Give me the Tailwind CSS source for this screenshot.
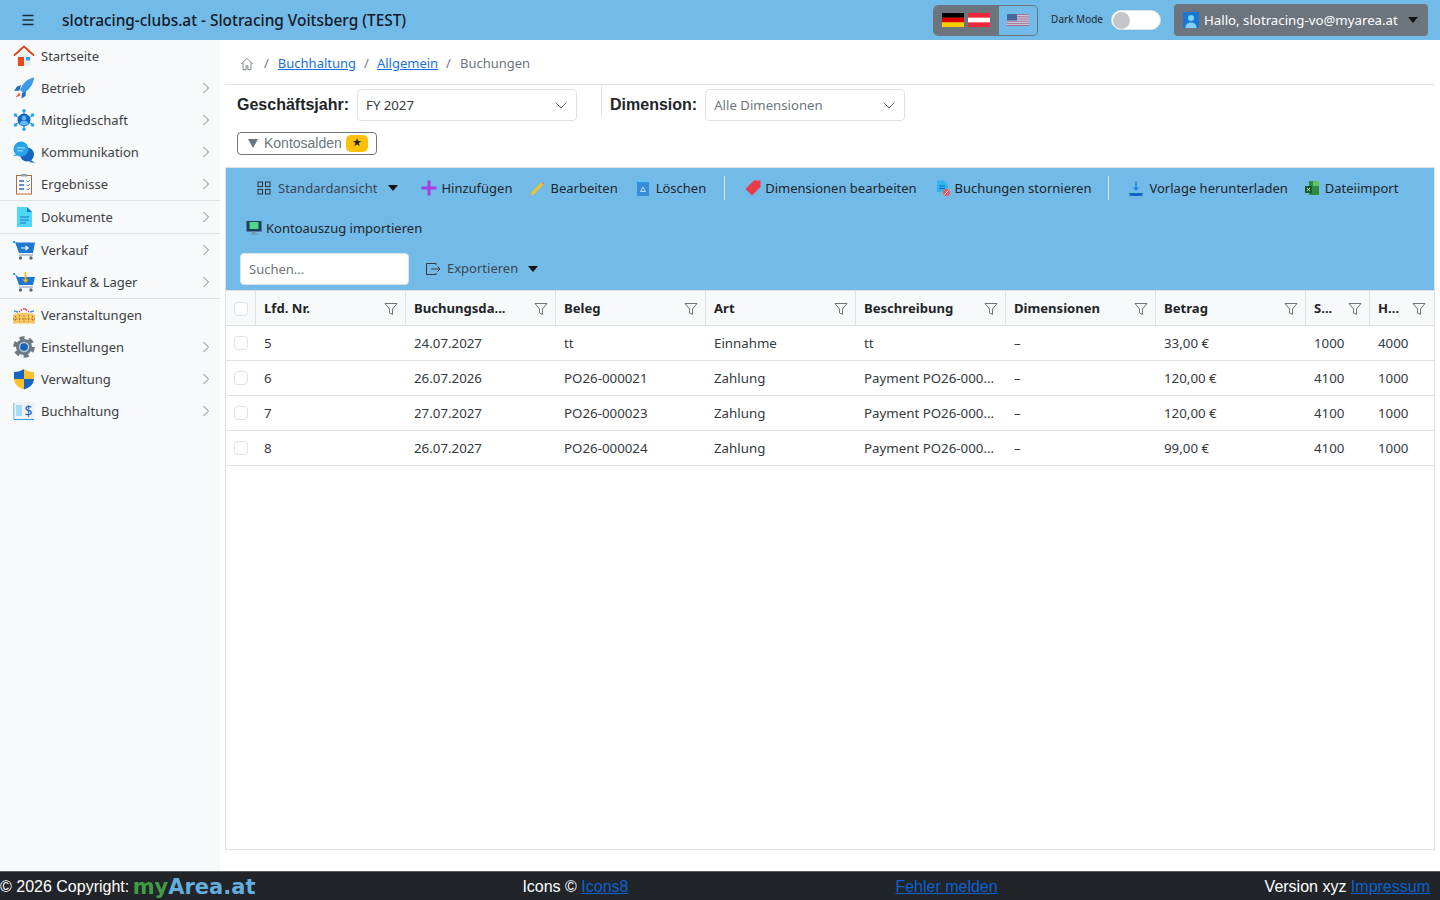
<!DOCTYPE html>
<html lang="de">
<head>
<meta charset="UTF-8">
<title>Buchungen</title>
<script src="https://cdn.jsdelivr.net/npm/@tailwindcss/browser@4"></script>
</head>
<body class="h-screen w-full overflow-hidden flex flex-col bg-white text-[13px] text-[#343a40] font-['Noto_Sans','Open_Sans',sans-serif]">
  <!-- Header -->
  <header class="h-10 shrink-0 bg-[#72bbe8] flex items-center text-[#111827]">
    <svg class="w-3.5 h-3.5 ml-[21px]" viewBox="0 0 14 14" fill="none" stroke="#212b36" stroke-width="1.4"><path d="M1.500 2.500h11M1.500 7h11M1.500 11.500h11"/></svg>
    <span class="ml-[27px] pt-[2px] text-[15.400px] font-medium">slotracing-clubs.at - Slotracing Voitsberg (TEST)</span>
    <div class="ml-auto flex items-center">
      <div class="w-[105px] h-[31px] rounded-[5px] border border-[#6c757d] flex overflow-hidden">
        <div class="w-[65px] bg-[#6c757d] flex items-center pl-2 gap-[4px]">
          <svg class="w-[22px] h-[14px]" viewBox="0 0 3 3" preserveAspectRatio="none"><rect width="3" height="1" fill="#000"/><rect y="1" width="3" height="1" fill="#dd0000"/><rect y="2" width="3" height="1" fill="#ffce00"/></svg>
          <svg class="w-[22px] h-[14px]" viewBox="0 0 3 3" preserveAspectRatio="none"><rect width="3" height="3" fill="#ed2939"/><rect y="1" width="3" height="1" fill="#fff"/></svg>
        </div>
        <div class="flex-1 flex items-center pl-2 opacity-60">
          <svg class="w-[22px] h-[12px]" viewBox="0 0 22 12" preserveAspectRatio="none"><rect width="22" height="12" fill="#d22f45"/><path d="M0 1.400h22M0 3.200h22M0 5h22M0 6.800h22M0 8.600h22M0 10.400h22" stroke="#fff" stroke-width=".9"/><rect width="10" height="6.500" fill="#2b2c6e"/></svg>
        </div>
      </div>
      <span class="ml-[13px] pb-[2px] text-[10px] text-[#212529]">Dark Mode</span>
      <div class="ml-2 w-[50px] h-5 rounded-full bg-white border border-[#dee2e6] flex items-center pl-px">
        <span class="w-[17px] h-[17px] rounded-full bg-[#c4c6c9]"></span>
      </div>
      <button class="ml-[13px] mr-3 w-[254px] h-8 rounded-[4px] bg-[#6c757d] flex items-center pl-[9px] text-white text-[13.250px]">
        <svg class="w-4 h-4 shrink-0" viewBox="0 0 16 16"><rect width="16" height="16" fill="#1976d2"/><circle cx="8" cy="6" r="3" fill="#7fd0f5"/><path d="M2.500 16c0-4 2.500-5.500 5.500-5.500s5.500 1.500 5.500 5.500z" fill="#7fd0f5"/></svg>
        <span class="ml-[5px] pt-[2px] whitespace-nowrap">Hallo, slotracing-vo@myarea.at</span>
        <span class="ml-auto mr-[10px] border-x-[5px] border-x-transparent border-t-[6px] border-t-[#111]"></span>
      </button>
    </div>
  </header>

  <div class="flex-1 flex min-h-0">
    <!-- Sidebar -->
    <aside class="w-[220px] shrink-0 bg-[#f8f9fa] text-[13px] text-[#3b4046]">
      <a class="h-8 flex items-center pl-[13px] pr-[10px]">
        <svg class="w-[22px] h-[22px] shrink-0" viewBox="0 0 22 22"><path d="M4 10.500 11 4l7 6.500V21H4z" fill="#eceff1"/><path d="M1 10.500 11 1.500l10 9" fill="none" stroke="#d84315" stroke-width="1.800"/><rect x="5" y="12" width="6" height="9" fill="#e64a19"/><rect x="13" y="12" width="4" height="3.500" fill="#29a3e8"/></svg>
        <span class="ml-[6px] pt-[2px]">Startseite</span>
      </a>
      <a class="h-8 flex items-center pl-[13px] pr-[10px]">
        <svg class="w-[22px] h-[22px] shrink-0" viewBox="0 0 22 22"><path d="M21 .5C15 1.500 9.500 6 7 13l3.500 3C16.500 13 20.500 7 21 .5z" fill="#3d9ae8"/><path d="M8 8 4 9.500 1 14l5.500-.5zM13 14.500l-.5 4.500-4 2.500.5-5.500z" fill="#1e6fc2"/><path d="m6 15.500-3.500 5 5-2z" fill="#f4603e"/></svg>
        <span class="ml-[6px] pt-[2px]">Betrieb</span>
        <svg class="ml-auto w-2 h-3" viewBox="0 0 8 12" fill="none" stroke="#7c8287"><path d="m1.500 1 5 5-5 5"/></svg>
      </a>
      <a class="h-8 flex items-center pl-[13px] pr-[10px]">
        <svg class="w-[22px] h-[22px] shrink-0" viewBox="0 0 22 22"><path d="M11 1v20M1 6l20 10M21 6 1 16" stroke="#1e88e5" stroke-width="1"/><circle cx="11" cy="11" r="6.500" fill="#1565c0"/><circle cx="11" cy="9" r="2.300" fill="#64b5f6"/><path d="M6.500 15c.5-2.500 2.500-3.500 4.500-3.500s4 1 4.500 3.500c-2.500 2-6.500 2-9 0z" fill="#64b5f6"/><circle cx="11" cy="1.800" r="1.800" fill="#29a3e8"/><circle cx="11" cy="20.200" r="1.800" fill="#29a3e8"/><circle cx="2.500" cy="6" r="1.800" fill="#29a3e8"/><circle cx="19.500" cy="6" r="1.800" fill="#29a3e8"/><circle cx="2.500" cy="16" r="1.800" fill="#29a3e8"/><circle cx="19.500" cy="16" r="1.800" fill="#29a3e8"/></svg>
        <span class="ml-[6px] pt-[2px]">Mitgliedschaft</span>
        <svg class="ml-auto w-2 h-3" viewBox="0 0 8 12" fill="none" stroke="#7c8287"><path d="m1.500 1 5 5-5 5"/></svg>
      </a>
      <a class="h-8 flex items-center pl-[13px] pr-[10px]">
        <svg class="w-[22px] h-[22px] shrink-0" viewBox="0 0 22 22"><circle cx="14" cy="13.500" r="7" fill="#1565c0"/><path d="m18 19 4 3-6-1z" fill="#1565c0"/><circle cx="8" cy="8" r="7.500" fill="#29a3e8"/><path d="m3 13-3 2 5-.5z" fill="#29a3e8"/><rect x="4" y="6" width="8" height="1.500" fill="#7fd0f5"/><rect x="4" y="9" width="6" height="1.500" fill="#7fd0f5"/></svg>
        <span class="ml-[6px] pt-[2px]">Kommunikation</span>
        <svg class="ml-auto w-2 h-3" viewBox="0 0 8 12" fill="none" stroke="#7c8287"><path d="m1.500 1 5 5-5 5"/></svg>
      </a>
      <a class="h-8 flex items-center pl-[13px] pr-[10px]">
        <svg class="w-[22px] h-[22px] shrink-0" viewBox="0 0 22 22"><rect x="3.500" y="2.500" width="15" height="18.500" fill="#fff" stroke="#b5683c"/><rect x="8" y="1" width="6" height="2.500" fill="#90a4ae"/><path d="M6 8h5M6 12h5M6 16h5" stroke="#5c8fd6" stroke-width="1.800"/><path d="m13.500 8 1.500 1 2-2M13.500 12l1.500 1 2-2M13.500 16l1.500 1 2-2" stroke="#5c8fd6" fill="none"/></svg>
        <span class="ml-[6px] pt-[2px]">Ergebnisse</span>
        <svg class="ml-auto w-2 h-3" viewBox="0 0 8 12" fill="none" stroke="#7c8287"><path d="m1.500 1 5 5-5 5"/></svg>
      </a>
      <div class="h-px bg-[#dee2e6]"></div>
      <a class="h-8 flex items-center pl-[13px] pr-[10px]">
        <svg class="w-[22px] h-[22px] shrink-0" viewBox="0 0 22 22"><path d="M4 1h10l5 5v15H4z" fill="#4dd8f7"/><path d="M14 1l5 5h-5z" fill="#1976d2"/><path d="M7 11h9M7 14h9M7 17h6" stroke="#1e6fc2" stroke-width="1.200"/></svg>
        <span class="ml-[6px] pt-[2px]">Dokumente</span>
        <svg class="ml-auto w-2 h-3" viewBox="0 0 8 12" fill="none" stroke="#7c8287"><path d="m1.500 1 5 5-5 5"/></svg>
      </a>
      <div class="h-px bg-[#dee2e6]"></div>
      <a class="h-8 flex items-center pl-[13px] pr-[10px]">
        <svg class="w-[22px] h-[22px] shrink-0" viewBox="0 0 22 22"><rect x="0" y="2" width="2" height="2" fill="#29a3e8"/><path d="M2 3l3 .5h17l-2 10.500H6z" fill="#1e78d2"/><path d="M8 9h7M12.500 7l2.500 2-2.500 2" stroke="#fff" fill="none" stroke-width="1.200"/><path d="M6 16h14" stroke="#90a4ae" stroke-width="1.200"/><circle cx="7.500" cy="19" r="1.700" fill="#546e7a"/><circle cx="18" cy="19" r="1.700" fill="#546e7a"/></svg>
        <span class="ml-[6px] pt-[2px]">Verkauf</span>
        <svg class="ml-auto w-2 h-3" viewBox="0 0 8 12" fill="none" stroke="#7c8287"><path d="m1.500 1 5 5-5 5"/></svg>
      </a>
      <a class="h-8 flex items-center pl-[13px] pr-[10px]">
        <svg class="w-[22px] h-[22px] shrink-0" viewBox="0 0 22 22"><rect x="0" y="2" width="2" height="2" fill="#29a3e8"/><path d="M2 3l3 3h17l-2 8H6z" fill="#1e78d2"/><path d="M12.500 1v9" stroke="#f6b800" stroke-width="1.600"/><path d="m9.500 8.500 3 3.500 3-3.500z" fill="#f6b800"/><path d="M6 16h14" stroke="#90a4ae" stroke-width="1.200"/><circle cx="7.500" cy="19" r="1.700" fill="#546e7a"/><circle cx="18" cy="19" r="1.700" fill="#546e7a"/></svg>
        <span class="ml-[6px] pt-[2px]">Einkauf &amp; Lager</span>
        <svg class="ml-auto w-2 h-3" viewBox="0 0 8 12" fill="none" stroke="#7c8287"><path d="m1.500 1 5 5-5 5"/></svg>
      </a>
      <div class="h-px bg-[#dee2e6]"></div>
      <a class="h-8 flex items-center pl-[13px] pr-[10px]">
        <svg class="w-[22px] h-[22px] shrink-0" viewBox="0 0 22 22"><path d="M0 11c3-3 19-3 22 0v8.500H0z" fill="#f6c667"/><path d="M2.500 12v6M6.500 11v7M11 11v7M15.500 11v7M19.500 12v6M0 15h22" stroke="#a8720f" stroke-dasharray="1.500 1.500"/><path d="M1 7l4 1M17 8l4-1" stroke="#4094e8" stroke-width="1.500"/><path d="M8 5l1 2M10 5h3M14 5l-1 2" stroke="#e25563" stroke-width="1.300"/><path d="M6 7l1 1M16 7l-1 1" stroke="#a63de0" stroke-width="1.300"/></svg>
        <span class="ml-[6px] pt-[2px]">Veranstaltungen</span>
      </a>
      <a class="h-8 flex items-center pl-[13px] pr-[10px]">
        <svg class="w-[22px] h-[22px] shrink-0" viewBox="0 0 22 22"><circle cx="11" cy="11" r="9" fill="none" stroke="#6c7a86" stroke-width="3.600" stroke-dasharray="5 4.420"/><circle cx="11" cy="11" r="8" fill="#6c7a86"/><circle cx="11" cy="11" r="5.200" fill="#b8c4cc"/><circle cx="11" cy="11" r="3.800" fill="#1565c0"/></svg>
        <span class="ml-[6px] pt-[2px]">Einstellungen</span>
        <svg class="ml-auto w-2 h-3" viewBox="0 0 8 12" fill="none" stroke="#7c8287"><path d="m1.500 1 5 5-5 5"/></svg>
      </a>
      <a class="h-8 flex items-center pl-[13px] pr-[10px]">
        <svg class="w-[22px] h-[22px] shrink-0" viewBox="0 0 22 22"><path d="M11 1c3 2 6 3 10 3v7H11z" fill="#fbc02d"/><path d="M11 1C8 3 5 4 1 4v7h10z" fill="#1565c0"/><path d="M1 11h10v10.500C6 20 1.500 17 1 11z" fill="#fbc02d"/><path d="M21 11H11v10.500c5-1.500 9.500-4.500 10-10.500z" fill="#1565c0"/></svg>
        <span class="ml-[6px] pt-[2px]">Verwaltung</span>
        <svg class="ml-auto w-2 h-3" viewBox="0 0 8 12" fill="none" stroke="#7c8287"><path d="m1.500 1 5 5-5 5"/></svg>
      </a>
      <a class="h-8 flex items-center pl-[13px] pr-[10px]">
        <svg class="w-[22px] h-[22px] shrink-0" viewBox="0 0 22 22"><path d="M1 3v16.500h20" fill="none" stroke="#29a3e8"/><rect x="1.500" y="2" width="20" height="17" fill="#eef2f5"/><rect x="3" y="5" width="6" height="11" fill="#a6dcf8"/><text x="15.500" y="16" font-size="14" text-anchor="middle" fill="#1565c0">$</text></svg>
        <span class="ml-[6px] pt-[2px]">Buchhaltung</span>
        <svg class="ml-auto w-2 h-3" viewBox="0 0 8 12" fill="none" stroke="#7c8287"><path d="m1.500 1 5 5-5 5"/></svg>
      </a>
    </aside>

    <!-- Main -->
    <main class="flex-1 min-w-0 px-[5px] flex flex-col pb-[21px]">
      <!-- Breadcrumb -->
      <nav class="h-[45px] shrink-0 border-b border-[#dee2e6] flex items-center pl-[15px] text-[13px] text-[#6c757d] pt-[4px]">
        <svg class="w-3.5 h-3.5" viewBox="0 0 16 16" fill="none" stroke="#6c757d"><path d="M1.500 8 8 1.500 14.500 8M3.500 6.500V14.500h3.500V10h2v4.500h3.500V6.500"/></svg>
        <span class="ml-[10px]">/</span>
        <a class="ml-[9px] text-[#1a6fd8] underline">Buchhaltung</a>
        <span class="ml-[8px]">/</span>
        <a class="ml-[8px] text-[#1a6fd8] underline">Allgemein</a>
        <span class="ml-[8px]">/</span>
        <span class="ml-[9px]">Buchungen</span>
      </nav>
      <!-- Filter row -->
      <div class="h-[37px] shrink-0 flex items-start pl-3 pt-1">
        <label class="h-8 flex items-center font-['Liberation_Sans',sans-serif] font-bold text-base text-[#212529]">Geschäftsjahr:</label>
        <div class="ml-2 w-[220px] h-8 rounded-[4px] border border-[#dee2e6] flex items-center px-2 text-[13.200px] text-[#343a40]">
          <span class="pt-[2px]">FY 2027</span>
          <svg class="ml-auto mr-[1px] w-3 h-3" viewBox="0 0 12 12" fill="none" stroke="#6c757d"><path d="m.5 3.500 5.500 5.500 5.500-5.500"/></svg>
        </div>
        <div class="ml-6 -mt-1 h-8 w-px bg-[#dee2e6]"></div>
        <label class="ml-2 h-8 flex items-center font-['Liberation_Sans',sans-serif] font-bold text-base text-[#212529]">Dimension:</label>
        <div class="ml-2 w-[200px] h-8 rounded-[4px] border border-[#dee2e6] flex items-center pl-2 pr-2 text-[13.200px] text-[#6c757d]">
          <span class="pt-[2px]">Alle Dimensionen</span>
          <svg class="ml-auto mr-[1px] w-3 h-3" viewBox="0 0 12 12" fill="none" stroke="#6c757d"><path d="m.5 3.500 5.500 5.500 5.500-5.500"/></svg>
        </div>
      </div>
      <div class="h-[45px] shrink-0 pl-3 pt-[10px]">
        <button class="w-[140px] h-[23px] rounded-[4px] border border-[#6c757d] flex items-center pl-[10px] pb-px font-['Liberation_Sans',sans-serif] text-sm text-[#6c757d]">
          <span class="border-x-[5px] border-x-transparent border-t-[9px] border-t-[#6c757d]"></span>
          <span class="ml-[6px]">Kontosalden</span>
          <span class="ml-1 w-[22px] h-[17px] rounded-[5px] bg-[#ffc107] text-[#212529] text-[11px] flex items-center justify-center">★</span>
        </button>
      </div>

      <!-- Table card -->
      <section class="flex-1 min-h-0 border border-[#dee2e6] flex flex-col">
        <!-- Toolbar -->
        <div class="h-[122px] shrink-0 bg-[#72bbe8] text-[#212529] text-[13px]">
          <div class="h-10 flex items-center pl-[31px]">
            <svg class="w-[14px] h-[14px]" viewBox="0 0 14 14" fill="none" stroke="#343a40" stroke-width="1.100"><rect x="1" y="1" width="4.500" height="4.500"/><rect x="8.500" y="1" width="4.500" height="4.500"/><rect x="1" y="8.500" width="4.500" height="4.500"/><rect x="8.500" y="8.500" width="4.500" height="4.500"/></svg>
            <span class="ml-[7px] pt-[2px] text-[#3b4651]">Standardansicht</span>
            <span class="ml-[11px] border-x-[5px] border-x-transparent border-t-[6px] border-t-[#111]"></span>
            <svg class="ml-[23px] w-4 h-4" viewBox="0 0 16 16"><path d="M8 .5v15M.5 8h15" stroke="#a63de0" stroke-width="3"/></svg>
            <span class="ml-1 pt-[2px]">Hinzufügen</span>
            <svg class="ml-[18px] w-[15px] h-[15px]" viewBox="0 0 16 16"><path d="M12 1.500 1.500 12 .5 15.500l3.500-1L14.500 4z" fill="#f2c22e"/><path d="m12 1.500 2.500 2.500 1-1L13 .5z" fill="#f27c6c"/></svg>
            <span class="ml-[5px] pt-[2px]">Bearbeiten</span>
            <svg class="ml-[19px] w-[12px] h-[16px]" viewBox="0 0 12 16"><rect y="2" width="12" height="14" fill="#3a8bd8"/><rect y="0" width="12" height="2" fill="#61c5f5"/><path d="m6 7-2.500 4.500h5z" fill="none" stroke="#cfe7fa" stroke-width=".9"/></svg>
            <span class="ml-[7px] pt-[2px]">Löschen</span>
            <div class="ml-[18px] w-px h-6 bg-[#dbe9f3]"></div>
            <svg class="ml-[20px] w-4 h-4" viewBox="0 0 16 16"><path d="M9 .5h6.500V7l-8.500 8.500L.5 9z" fill="#ea3b48"/></svg>
            <span class="ml-[4px] pt-[2px]">Dimensionen bearbeiten</span>
            <svg class="ml-[18px] w-4 h-4" viewBox="0 0 16 16"><path d="M2 .5h7l4 4V12H2z" fill="#33b5ec"/><path d="M4 6h6M4 8.500h6" stroke="#1565c0"/><circle cx="11.500" cy="12.500" r="3.500" fill="#ee5a5a"/><path d="m9.500 14.500 4-4" stroke="#fff"/></svg>
            <span class="ml-1 pt-[2px]">Buchungen stornieren</span>
            <div class="ml-[17px] w-px h-6 bg-[#dbe9f3]"></div>
            <svg class="ml-[19px] w-4 h-4" viewBox="0 0 16 16"><path d="M8 1v9" stroke="#1e88e5" stroke-width="1.500"/><path d="m5 7.500 3 3.500 3-3.500z" fill="#1e88e5"/><path d="M1 13h14l-1 3H2z" fill="#1565c0"/></svg>
            <span class="ml-[5px] pt-[2px]">Vorlage herunterladen</span>
            <svg class="ml-[16px] w-4 h-4" viewBox="0 0 16 16"><rect x="5" y="1" width="10" height="14" fill="#2e8b40"/><rect x="9" y="1" width="6" height="5" fill="#5ec26b"/><rect x="1" y="6" width="7" height="7" fill="#185c2c"/><path d="m3 8 3 3M6 8l-3 3" stroke="#fff" stroke-width=".8"/></svg>
            <span class="ml-[5px] pt-[2px]">Dateiimport</span>
          </div>
          <div class="h-10 flex items-center pl-[20px]">
            <svg class="w-4 h-4" viewBox="0 0 16 16"><rect x=".5" y="1" width="15" height="10.500" fill="#1f3f5c"/><rect x="3.500" y="2" width="9" height="7" fill="#4ed68a"/><rect x="6.500" y="11.500" width="3" height="2" fill="#78909c"/><rect x="4.500" y="13.500" width="7" height="1" fill="#78909c"/></svg>
            <span class="ml-[4px] pt-[2px]">Kontoauszug importieren</span>
          </div>
          <div class="h-[41px] flex items-center pl-[14px]">
            <input class="w-[169px] h-8 rounded-[4px] border border-[#dee2e6] bg-white px-2 text-[13px] placeholder:text-[#6c757d]" placeholder="Suchen...">
            <svg class="ml-[16px] w-4 h-4" viewBox="0 0 16 16" fill="none" stroke="#343a40"><path d="M11 4V2.500H1.500v11H11V12M6 8h9M12.500 5.500 15 8l-2.500 2.500"/></svg>
            <span class="ml-[6px] text-[#3b4651]">Exportieren</span>
            <span class="ml-[10px] border-x-[5px] border-x-transparent border-t-[6px] border-t-[#111]"></span>
          </div>
        </div>
        <!-- Table -->
        <div class="grid grid-cols-[29px_150px_150px_150px_150px_150px_150px_150px_64px_65px] grid-rows-[36px] auto-rows-[35px] text-[13.300px] text-[#343a40]">
          <div class="bg-[#f8f9fa] border-y border-[#dee2e6] flex items-center justify-center pt-[2px]"><span class="w-[14px] h-[14px] rounded-[4px] border border-[#dee2e6] bg-white"></span></div>
          <div class="bg-[#f8f9fa] border-y border-l border-[#dee2e6] flex items-center pl-2 pr-[7px] pt-[2px] font-bold text-[#212529] text-[13.100px] justify-between">Lfd. Nr.<svg class="w-3.5 h-3.5" viewBox="0 0 14 14" fill="none" stroke="#6c757d"><path d="M1 1.500h12L8.500 7v5.500l-3-1.500V7z"/></svg></div>
          <div class="bg-[#f8f9fa] border-y border-l border-[#dee2e6] flex items-center pl-2 pr-[7px] pt-[2px] font-bold text-[#212529] text-[13.100px] justify-between">Buchungsda...<svg class="w-3.5 h-3.5" viewBox="0 0 14 14" fill="none" stroke="#6c757d"><path d="M1 1.500h12L8.500 7v5.500l-3-1.500V7z"/></svg></div>
          <div class="bg-[#f8f9fa] border-y border-l border-[#dee2e6] flex items-center pl-2 pr-[7px] pt-[2px] font-bold text-[#212529] text-[13.100px] justify-between">Beleg<svg class="w-3.5 h-3.5" viewBox="0 0 14 14" fill="none" stroke="#6c757d"><path d="M1 1.500h12L8.500 7v5.500l-3-1.500V7z"/></svg></div>
          <div class="bg-[#f8f9fa] border-y border-l border-[#dee2e6] flex items-center pl-2 pr-[7px] pt-[2px] font-bold text-[#212529] text-[13.100px] justify-between">Art<svg class="w-3.5 h-3.5" viewBox="0 0 14 14" fill="none" stroke="#6c757d"><path d="M1 1.500h12L8.500 7v5.500l-3-1.500V7z"/></svg></div>
          <div class="bg-[#f8f9fa] border-y border-l border-[#dee2e6] flex items-center pl-2 pr-[7px] pt-[2px] font-bold text-[#212529] text-[13.100px] justify-between">Beschreibung<svg class="w-3.5 h-3.5" viewBox="0 0 14 14" fill="none" stroke="#6c757d"><path d="M1 1.500h12L8.500 7v5.500l-3-1.500V7z"/></svg></div>
          <div class="bg-[#f8f9fa] border-y border-l border-[#dee2e6] flex items-center pl-2 pr-[7px] pt-[2px] font-bold text-[#212529] text-[13.100px] justify-between">Dimensionen<svg class="w-3.5 h-3.5" viewBox="0 0 14 14" fill="none" stroke="#6c757d"><path d="M1 1.500h12L8.500 7v5.500l-3-1.500V7z"/></svg></div>
          <div class="bg-[#f8f9fa] border-y border-l border-[#dee2e6] flex items-center pl-2 pr-[7px] pt-[2px] font-bold text-[#212529] text-[13.100px] justify-between">Betrag<svg class="w-3.5 h-3.5" viewBox="0 0 14 14" fill="none" stroke="#6c757d"><path d="M1 1.500h12L8.500 7v5.500l-3-1.500V7z"/></svg></div>
          <div class="bg-[#f8f9fa] border-y border-l border-[#dee2e6] flex items-center pl-2 pr-[7px] pt-[2px] font-bold text-[#212529] text-[13.100px] justify-between">S...<svg class="w-3.5 h-3.5" viewBox="0 0 14 14" fill="none" stroke="#6c757d"><path d="M1 1.500h12L8.500 7v5.500l-3-1.500V7z"/></svg></div>
          <div class="bg-[#f8f9fa] border-y border-l border-[#dee2e6] flex items-center pl-2 pr-[8px] pt-[2px] font-bold text-[#212529] text-[13.100px] justify-between">H...<svg class="w-3.5 h-3.5" viewBox="0 0 14 14" fill="none" stroke="#6c757d"><path d="M1 1.500h12L8.500 7v5.500l-3-1.500V7z"/></svg></div>

          <div class="border-b border-[#dee2e6] flex items-center justify-center"><span class="w-[14px] h-[14px] rounded-[4px] border border-[#dee2e6] bg-white"></span></div>
          <div class="border-b border-[#dee2e6] flex items-center pl-[9px] pt-[2px]">5</div>
          <div class="border-b border-[#dee2e6] flex items-center pl-[9px] pt-[2px]">24.07.2027</div>
          <div class="border-b border-[#dee2e6] flex items-center pl-[9px] pt-[2px]">tt</div>
          <div class="border-b border-[#dee2e6] flex items-center pl-[9px] pt-[2px]">Einnahme</div>
          <div class="border-b border-[#dee2e6] flex items-center pl-[9px] pt-[2px]">tt</div>
          <div class="border-b border-[#dee2e6] flex items-center pl-[9px] pt-[2px]">–</div>
          <div class="border-b border-[#dee2e6] flex items-center pl-[9px] pt-[2px]">33,00 €</div>
          <div class="border-b border-[#dee2e6] flex items-center pl-[9px] pt-[2px]">1000</div>
          <div class="border-b border-[#dee2e6] flex items-center pl-[9px] pt-[2px]">4000</div>

          <div class="border-b border-[#dee2e6] flex items-center justify-center"><span class="w-[14px] h-[14px] rounded-[4px] border border-[#dee2e6] bg-white"></span></div>
          <div class="border-b border-[#dee2e6] flex items-center pl-[9px] pt-[2px]">6</div>
          <div class="border-b border-[#dee2e6] flex items-center pl-[9px] pt-[2px]">26.07.2026</div>
          <div class="border-b border-[#dee2e6] flex items-center pl-[9px] pt-[2px]">PO26-000021</div>
          <div class="border-b border-[#dee2e6] flex items-center pl-[9px] pt-[2px]">Zahlung</div>
          <div class="border-b border-[#dee2e6] flex items-center pl-[9px] pt-[2px]">Payment PO26-000...</div>
          <div class="border-b border-[#dee2e6] flex items-center pl-[9px] pt-[2px]">–</div>
          <div class="border-b border-[#dee2e6] flex items-center pl-[9px] pt-[2px]">120,00 €</div>
          <div class="border-b border-[#dee2e6] flex items-center pl-[9px] pt-[2px]">4100</div>
          <div class="border-b border-[#dee2e6] flex items-center pl-[9px] pt-[2px]">1000</div>

          <div class="border-b border-[#dee2e6] flex items-center justify-center"><span class="w-[14px] h-[14px] rounded-[4px] border border-[#dee2e6] bg-white"></span></div>
          <div class="border-b border-[#dee2e6] flex items-center pl-[9px] pt-[2px]">7</div>
          <div class="border-b border-[#dee2e6] flex items-center pl-[9px] pt-[2px]">27.07.2027</div>
          <div class="border-b border-[#dee2e6] flex items-center pl-[9px] pt-[2px]">PO26-000023</div>
          <div class="border-b border-[#dee2e6] flex items-center pl-[9px] pt-[2px]">Zahlung</div>
          <div class="border-b border-[#dee2e6] flex items-center pl-[9px] pt-[2px]">Payment PO26-000...</div>
          <div class="border-b border-[#dee2e6] flex items-center pl-[9px] pt-[2px]">–</div>
          <div class="border-b border-[#dee2e6] flex items-center pl-[9px] pt-[2px]">120,00 €</div>
          <div class="border-b border-[#dee2e6] flex items-center pl-[9px] pt-[2px]">4100</div>
          <div class="border-b border-[#dee2e6] flex items-center pl-[9px] pt-[2px]">1000</div>

          <div class="border-b border-[#dee2e6] flex items-center justify-center"><span class="w-[14px] h-[14px] rounded-[4px] border border-[#dee2e6] bg-white"></span></div>
          <div class="border-b border-[#dee2e6] flex items-center pl-[9px] pt-[2px]">8</div>
          <div class="border-b border-[#dee2e6] flex items-center pl-[9px] pt-[2px]">26.07.2027</div>
          <div class="border-b border-[#dee2e6] flex items-center pl-[9px] pt-[2px]">PO26-000024</div>
          <div class="border-b border-[#dee2e6] flex items-center pl-[9px] pt-[2px]">Zahlung</div>
          <div class="border-b border-[#dee2e6] flex items-center pl-[9px] pt-[2px]">Payment PO26-000...</div>
          <div class="border-b border-[#dee2e6] flex items-center pl-[9px] pt-[2px]">–</div>
          <div class="border-b border-[#dee2e6] flex items-center pl-[9px] pt-[2px]">99,00 €</div>
          <div class="border-b border-[#dee2e6] flex items-center pl-[9px] pt-[2px]">4100</div>
          <div class="border-b border-[#dee2e6] flex items-center pl-[9px] pt-[2px]">1000</div>
        </div>
      </section>
    </main>
  </div>

  <!-- Footer -->
  <footer class="h-[29px] shrink-0 bg-[#212529] border-t border-[#dee2e6]/30 flex justify-between items-center pt-[2px] pr-[10px] text-white font-['Liberation_Sans',sans-serif] text-base whitespace-nowrap">
    <div class="flex items-center">© 2026 Copyright:&nbsp;<span class="-ml-[1px] font-['DejaVu_Sans',sans-serif] text-[21px] font-bold leading-none"><span class="text-[#3f9c45]">my</span><span class="text-[#62aede]">Area.at</span></span></div>
    <div>Icons © <a class="text-[#0a62d0] underline">Icons8</a></div>
    <div><a class="text-[#0a62d0] underline">Fehler melden</a></div>
    <div>Version xyz <a class="text-[#0a62d0] underline">Impressum</a></div>
  </footer>
</body>
</html>
